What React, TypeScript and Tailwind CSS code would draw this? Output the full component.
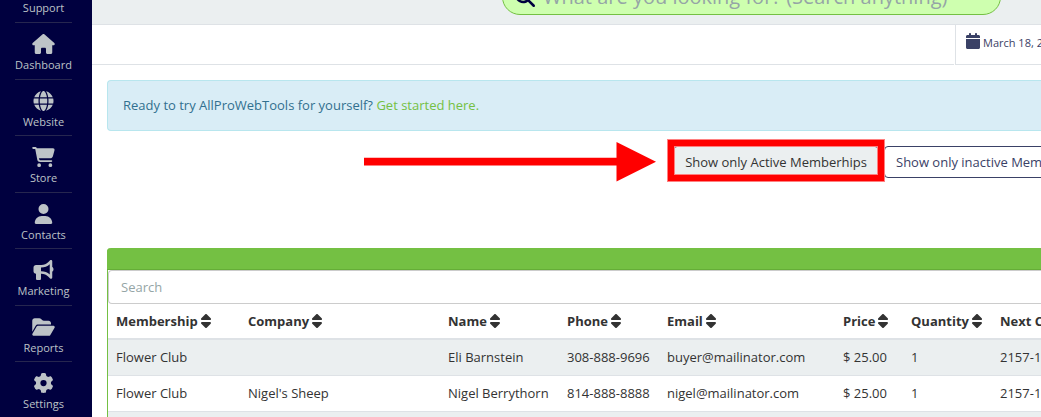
import type { IconType } from "react-icons";
import {
  FaBullhorn,
  FaCalendar,
  FaCartShopping,
  FaFolderOpen,
  FaGear,
  FaGlobe,
  FaHouse,
  FaMagnifyingGlass,
  FaSort,
  FaUser,
} from "react-icons/fa6";

const navItems: { label: string; icon: IconType }[] = [
  { label: "Dashboard", icon: FaHouse },
  { label: "Website", icon: FaGlobe },
  { label: "Store", icon: FaCartShopping },
  { label: "Contacts", icon: FaUser },
  { label: "Marketing", icon: FaBullhorn },
  { label: "Reports", icon: FaFolderOpen },
  { label: "Settings", icon: FaGear },
];

const columns = [
  { label: "Membership", width: "w-[132px]" },
  { label: "Company", width: "w-[200px]" },
  { label: "Name", width: "w-[119px]" },
  { label: "Phone", width: "w-[100px]" },
  { label: "Email", width: "w-[176px]" },
  { label: "Price", width: "w-[68px]" },
  { label: "Quantity", width: "w-[89px]" },
  { label: "Next C", width: "w-auto" },
];

const rows = [
  ["Flower Club", "", "Eli Barnstein", "308-888-9696", "buyer@mailinator.com", "$ 25.00", "1", "2157-1"],
  ["Flower Club", "Nigel's Sheep", "Nigel Berrythorn", "814-888-8888", "nigel@mailinator.com", "$ 25.00", "1", "2157-1"],
  ["", "", "", "", "", "", "", ""],
];

function Sidebar() {
  return (
    <nav className="w-[92px] shrink-0 overflow-hidden bg-[#00003f] pr-5 pl-[15px] text-center text-[11px] leading-4 text-[#bdc3c7]">
      <a href="#support" className="block h-[23px] border-b border-[#26264f]">
        Support
      </a>
      <div className="grid min-h-[396px] auto-rows-fr">
        {navItems.map(({ label, icon: Icon }) => (
          <a
            key={label}
            href={`#${label.toLowerCase()}`}
            className="flex flex-col items-center gap-[3px] border-b border-[#26264f] pt-[11px]"
          >
            <Icon className="h-5 w-[23px] shrink-0" />
            <span>{label}</span>
          </a>
        ))}
      </div>
    </nav>
  );
}

function TopBar() {
  return (
    <header>
      <div className="flex h-[25px] items-end justify-end overflow-hidden border-b border-[#dee2e6] bg-[#ebeff0] pr-10 pb-[9px]">
        <label className="flex h-9 w-[499px] shrink-0 items-center gap-2 rounded-full border border-[#74c043] bg-[#ceffaf] px-3">
          <FaMagnifyingGlass className="size-5 shrink-0 text-[#00003f]" />
          <input
            type="search"
            aria-label="Search anything"
            placeholder="What are you looking for? (Search anything)"
            className="min-w-0 flex-1 bg-transparent text-xl leading-7 outline-none placeholder:text-[#95a5a6]"
          />
        </label>
      </div>
      <div className="flex h-10 gap-px">
        <div className="flex-1 border-b border-[#dee2e6]" />
        <div className="flex w-[86px] shrink-0 items-start gap-[3px] overflow-hidden border-b border-l border-[#dee2e6] pt-2 pl-[10px] text-[11px] leading-5 whitespace-nowrap text-[#3a4166]">
          <FaCalendar className="h-4 w-[14px] shrink-0" />
          <span>March 18, 2</span>
        </div>
      </div>
    </header>
  );
}

function Arrow() {
  return (
    <svg width="292" height="40" viewBox="0 0 292 40" className="mr-[17px] shrink-0" aria-hidden="true">
      <path d="M0 15.8H252.5V0L292 19.7L252.5 39.4V23.4H0Z" fill="#ff0000" />
    </svg>
  );
}

function Actions() {
  return (
    <div className="flex h-12 items-center justify-end">
      <Arrow />
      <div className="relative mr-[5px] shrink-0">
        <button
          type="button"
          className="h-8 rounded-sm border border-[#3a4166] bg-[#ebeff0] px-[11px] whitespace-nowrap"
        >
          Show only Active Memberhips
        </button>
        <div className="pointer-events-none absolute -inset-x-[5px] -top-[6px] -bottom-[3px] z-10 border-[6px] border-[#ff0000] shadow-[0_0_0_1px_#ff8080,inset_0_0_0_1px_#ff8080]" />
      </div>
      <button
        type="button"
        className="-mr-4 h-8 w-[173px] shrink-0 overflow-hidden rounded-sm border border-[#3a4166] bg-white pl-[11px] text-left whitespace-nowrap text-[#3a4166]"
      >
        Show only inactive Mem
      </button>
    </div>
  );
}

function Memberships() {
  return (
    <section className="rounded-tl border-l border-[#74c043]">
      <div className="-ml-px h-[22px] rounded-tl border-b border-[#65ad37] bg-[#74c043]" />
      <input
        type="search"
        aria-label="Search memberships"
        placeholder="Search"
        className="block h-[34px] w-full rounded-l border border-r-0 border-[#ccc] px-3 outline-none placeholder:text-[#95a5a6]"
      />
      <table className="w-full table-fixed border-separate border-spacing-0 text-left whitespace-nowrap">
        <thead>
          <tr className="h-9">
            {columns.map((column) => (
              <th key={column.label} className={`${column.width} border-b-2 border-[#dee2e6] pl-2 font-bold`}>
                <span className="flex items-center gap-[3px]">
                  {column.label}
                  {column.label !== "Next C" && <FaSort className="h-4 w-[10px] shrink-0" />}
                </span>
              </th>
            ))}
          </tr>
        </thead>
        <tbody>
          {rows.map((row, i) => (
            <tr key={i} className="h-9 odd:bg-[#ebeff0]">
              {row.map((cell, j) => (
                <td key={j} className="border-b border-[#dee2e6] pt-[7px] pl-2 align-top">
                  {cell}
                </td>
              ))}
            </tr>
          ))}
        </tbody>
      </table>
    </section>
  );
}

export default function App() {
  return (
    <div className="flex h-screen overflow-hidden bg-white font-['Open_Sans',sans-serif] text-[13px] leading-5 text-[#333]">
      <Sidebar />
      <div className="min-w-0 flex-1">
        <TopBar />
        <main className="pt-[15px] pl-[15px]">
          <div className="rounded-l border border-r-0 border-[#b8e6ee] bg-[#d9edf6] px-[15px] pt-[14px] pb-[15px] text-[#31708f]">
            Ready to try AllProWebTools for yourself?{" "}
            <a href="#start" className="text-[#74c043]">
              Get started here.
            </a>
          </div>
          <div className="pt-[7px] pb-[62px]">
            <Actions />
          </div>
          <Memberships />
        </main>
      </div>
    </div>
  );
}
